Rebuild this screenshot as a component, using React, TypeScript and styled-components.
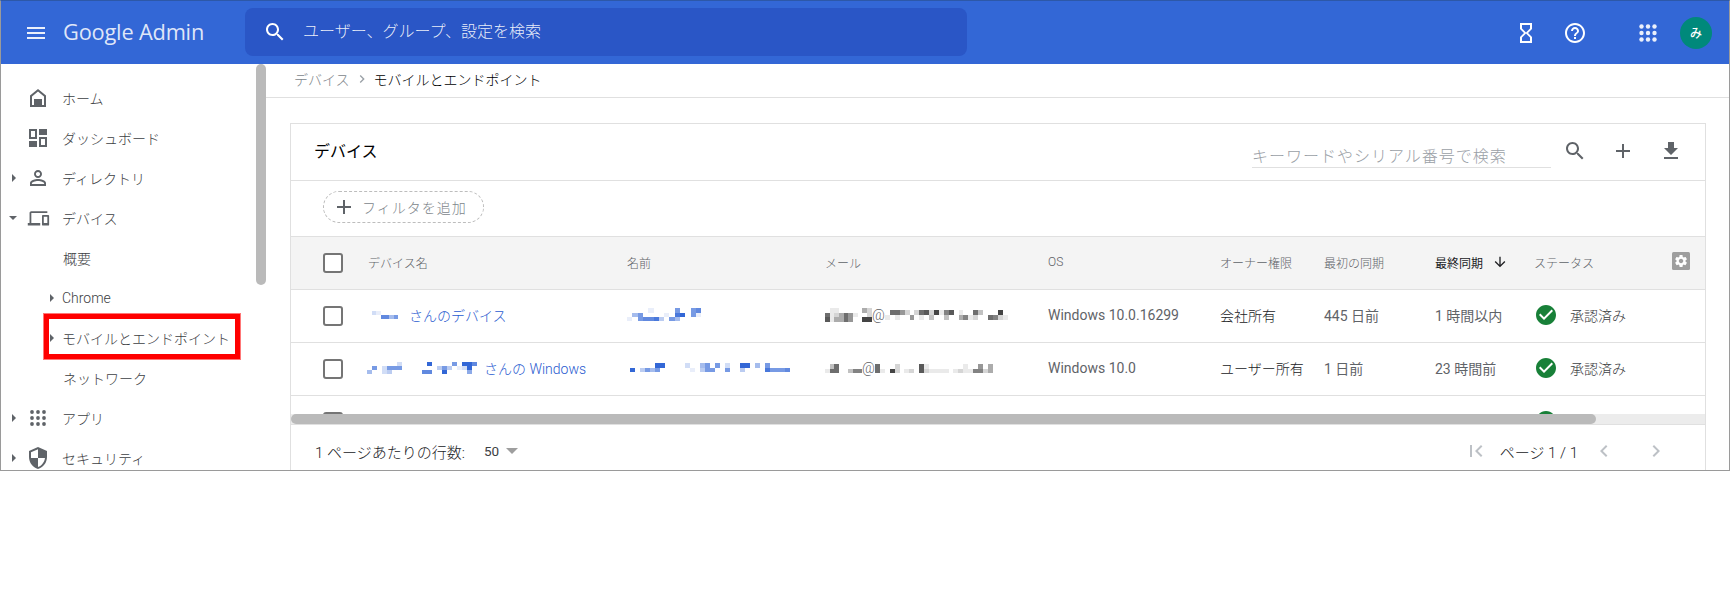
import * as React from 'react';
import styled, { createGlobalStyle } from 'styled-components';

const GlobalStyle = createGlobalStyle`
    html, body {
        margin: 0;
        padding: 0;
        background: #fff;
    }
    body {
        font-family: Roboto, "Noto Sans CJK JP", sans-serif;
        font-size: 14px;
        color: #3c4043;
    }
`;

const COLUMNS = '45px 259px 198px 223px 172px 104px 111px 99px 1fr';

const Frame = styled.div`
    box-sizing: border-box;
    width: 1730px;
    height: 471px;
    border: 1px solid #9a9a9a;
    border-top-color: #2d58a8;
    overflow: hidden;
    display: flex;
    flex-direction: column;
`;

const TopBar = styled.header`
    flex: 0 0 63px;
    display: flex;
    align-items: center;
    background: #3367d6;
    color: #fff;
`;

const MenuButton = styled.div`
    width: 18px;
    margin: 0 18px 0 26px;
    display: flex;
    flex-direction: column;
    gap: 3px;
    span {
        display: block;
        height: 2px;
        background: #fff;
        opacity: .9;
    }
`;

const Logo = styled.div`
    width: 182px;
    margin-bottom: 2px;
    font-family: "Open Sans", sans-serif;
    font-size: 21.8px;
    letter-spacing: -.2px;
    color: rgba(255, 255, 255, .85);
`;

const SearchBox = styled.div`
    width: 722px;
    height: 48px;
    margin-top: -1px;
    box-sizing: border-box;
    padding-left: 18px;
    display: flex;
    align-items: center;
    gap: 16px;
    background: #2a56c6;
    border-radius: 8px;
    font-size: 16px;
    font-weight: 300;
    color: rgba(255, 255, 255, .9);
`;

const SearchText = styled.span`
    margin-top: -5px;
`;

const BarIcons = styled.div`
    margin-left: auto;
    display: flex;
    align-items: center;
    padding-right: 17px;
`;

const BarIcon = styled.svg<{ $gap: number }>`
    display: block;
    width: 24px;
    height: 24px;
    margin-right: ${p => p.$gap}px;
    fill: #fff;
`;

const Avatar = styled.div`
    width: 32px;
    height: 32px;
    border-radius: 50%;
    background: #00897b;
    color: #fff;
    font-size: 12px;
    font-weight: 500;
    display: flex;
    align-items: center;
    justify-content: center;
`;

const Body = styled.div`
    flex: 1;
    display: flex;
    min-height: 0;
`;

const SideBar = styled.nav`
    flex: 0 0 265px;
    display: flex;
`;

const NavList = styled.div`
    flex: 1;
    padding-top: 14px;
`;

const NavRow = styled.div<{ $sub?: boolean }>`
    position: relative;
    height: 40px;
    display: flex;
    align-items: center;
    padding-left: ${p => (p.$sub ? 47 : 9)}px;
    color: #3c4043;
    font-size: 14px;
`;

const CaretSlot = styled.div<{ $sub?: boolean }>`
    flex: 0 0 ${p => (p.$sub ? 14 : 17)}px;
    display: flex;
`;

const Caret = styled.span<{ $open?: boolean }>`
    display: block;
    width: 0;
    height: 0;
    margin-left: ${p => (p.$open ? -1 : 2)}px;
    ${p =>
        p.$open
            ? 'border-left: 4px solid transparent; border-right: 4px solid transparent; border-top: 4px solid #5f6368;'
            : 'border-top: 4px solid transparent; border-bottom: 4px solid transparent; border-left: 4px solid #5f6368;'}
`;

const NavIcon = styled.svg`
    flex: 0 0 24px;
    width: 24px;
    height: 24px;
    margin: 0 12px 0 -1px;
    fill: #5f6368;
`;

const NavLabel = styled.span<{ $plain?: boolean }>`
    margin-left: ${p => (p.$plain ? 53 : 0)}px;
    font-weight: 300;
`;

const Annotation = styled.div`
    position: absolute;
    left: 43px;
    top: -4px;
    width: 186px;
    height: 35px;
    border: 5px solid #f00;
    outline: 1px solid #ff7777;
    pointer-events: none;
`;

const SideRail = styled.div`
    flex: 0 0 10px;
`;

const SideThumb = styled.div`
    height: 221px;
    background: #bababa;
    border-radius: 5px;
`;

const Main = styled.main`
    flex: 1;
    min-width: 0;
    display: flex;
    flex-direction: column;
`;

const Crumbs = styled.div`
    flex: 0 0 34px;
    box-sizing: border-box;
    display: flex;
    align-items: center;
    padding: 0 0 3px 28px;
    border-bottom: 1px solid #e0e0e0;
    font-weight: 300;
`;

const CrumbParent = styled.span`
    color: #80868b;
`;

const CrumbArrow = styled.svg`
    width: 16px;
    height: 16px;
    margin: 0 4px;
    fill: #9aa0a6;
`;

const CrumbCurrent = styled.span`
    color: #000;
`;

const Card = styled.section`
    margin: 25px 23px 0 24px;
    border: 1px solid #e0e0e0;
    height: 360px;
    flex-shrink: 0;
`;

const CardTitleRow = styled.div`
    box-sizing: border-box;
    height: 57px;
    display: flex;
    align-items: center;
    padding: 0 22px 2px 23px;
    border-bottom: 1px solid #e0e0e0;
`;

const CardTitle = styled.h2`
    margin: -2px 0 0;
    font-size: 16px;
    font-weight: 400;
    color: #000;
`;

const KeywordField = styled.div`
    margin-left: auto;
    width: 299px;
    box-sizing: border-box;
    height: 26px;
    margin-top: 8px;
    padding-top: 4px;
    border-bottom: 1px solid #e0e0e0;
    color: #9aa0a6;
    font-size: 16px;
    font-weight: 300;
    letter-spacing: 1px;
    line-height: 22px;
`;

const ToolIcon = styled.svg<{ $gap: number }>`
    width: 24px;
    height: 24px;
    margin-left: ${p => p.$gap}px;
    fill: #5f6368;
`;

const FilterRow = styled.div`
    box-sizing: border-box;
    height: 56px;
    display: flex;
    align-items: center;
    padding: 0 0 3px 32px;
    border-bottom: 1px solid #e0e0e0;
`;

const FilterPill = styled.div`
    box-sizing: border-box;
    width: 161px;
    height: 32px;
    display: flex;
    align-items: center;
    padding-left: 8px;
    gap: 6px;
    border: 1px dashed #bdbdbd;
    border-radius: 16px;
    color: #80868b;
    font-size: 14px;
    font-weight: 300;
    letter-spacing: 1px;
    svg {
        width: 24px;
        height: 24px;
        fill: #5f6368;
    }
`;

const TableScroll = styled.div`
    height: 177px;
    overflow: hidden;
`;

const HeadRow = styled.div`
    box-sizing: border-box;
    height: 53px;
    display: grid;
    grid-template-columns: ${COLUMNS};
    align-items: center;
    padding-left: 32px;
    background: #f4f4f4;
    border-bottom: 1px solid #e0e0e0;
`;

const HeadCell = styled.div<{ $sorted?: boolean }>`
    display: flex;
    align-items: center;
    padding-bottom: 2px;
    font-size: 12px;
    font-weight: ${p => (p.$sorted ? 400 : 300)};
    color: ${p => (p.$sorted ? '#202124' : '#5f6368')};
`;

const SortArrow = styled.svg`
    width: 16px;
    height: 16px;
    margin-left: 9px;
    fill: #202124;
`;

const GearBox = styled.svg`
    width: 18px;
    height: 18px;
    display: block;
    margin: -2px 15px 0 auto;
`;

const DataRow = styled.div`
    box-sizing: border-box;
    height: 53px;
    display: grid;
    grid-template-columns: ${COLUMNS};
    align-items: center;
    padding-left: 32px;
    border-bottom: 1px solid #e0e0e0;
`;

const Check = styled.div`
    box-sizing: border-box;
    width: 20px;
    height: 20px;
    border: 2px solid #757575;
    border-radius: 3px;
    background: #fff;
`;

const Cell = styled.div<{ $dark?: boolean }>`
    display: flex;
    align-items: center;
    padding-bottom: 2px;
    white-space: nowrap;
    font-size: 14px;
    font-weight: ${p => (p.$dark ? 300 : 400)};
    color: ${p => (p.$dark ? '#202124' : '#5f6368')};
`;

const DeviceLink = styled.span`
    color: #2a5bd0;
    font-weight: 300;
`;

const At = styled.span`
    font-size: 14px;
    font-weight: 300;
    color: #5f6368;
`;

const StatusCell = styled.div`
    display: flex;
    align-items: center;
    gap: 14px;
    padding-left: 2px;
    font-size: 14px;
    font-weight: 300;
    color: #3c4043;
`;

const StatusText = styled.span`
    margin-top: -3px;
`;

const StatusIcon = styled.svg`
    width: 24px;
    height: 24px;
    margin: -2px -2px 0 -2px;
    fill: #188038;
`;

const MosaicSvg = styled.svg<{ $lead: number; $trail: number; $lift: number }>`
    display: block;
    flex-shrink: 0;
    margin-left: ${p => p.$lead}px;
    margin-right: ${p => p.$trail}px;
    margin-bottom: ${p => p.$lift}px;
`;

const ScrollTrack = styled.div`
    height: 10px;
    background: #ececec;
    border-bottom: 1px solid #e0e0e0;
`;

const ScrollThumb = styled.div`
    height: 10px;
    background: #bababa;
    border-radius: 5px;
`;

const Footer = styled.div`
    height: 52px;
    display: flex;
    align-items: center;
    padding: 0 0 0 24px;
    font-size: 15px;
    font-weight: 300;
    color: #202124;
`;

const RowsLabel = styled.span`
    width: 169px;
`;

const RowsValue = styled.span`
    font-weight: 400;
    font-size: 13.5px;
    color: #3c4043;
`;

const RowsCaret = styled.span`
    margin-left: 7px;
    width: 0;
    height: 0;
    border-left: 6px solid transparent;
    border-right: 6px solid transparent;
    border-top: 6px solid #9e9e9e;
`;

const Pager = styled.div`
    margin-left: auto;
    display: flex;
    align-items: center;
    padding-right: 37px;
`;

const PagerIcon = styled.svg<{ $gap: number }>`
    width: 24px;
    height: 24px;
    margin-left: ${p => p.$gap}px;
    fill: #bdc1c6;
`;

const PagerLabel = styled.span`
    margin: 0 14px 0 12px;
`;

const Dots = styled.svg`
    width: 24px;
    height: 24px;
    margin-right: 20px;
    fill: #fff;
    opacity: .9;
`;

const ICONS = {
    search: 'M15.5 14h-.79l-.28-.27C15.41 12.59 16 11.11 16 9.5 16 5.91 13.09 3 9.5 3S3 5.91 3 9.5 5.91 16 9.5 16c1.61 0 3.09-.59 4.23-1.57l.27.28v.79l5 4.99L20.49 19l-4.99-5zm-6 0C7.01 14 5 11.99 5 9.5S7.01 5 9.5 5 14 7.01 14 9.5 11.99 14 9.5 14z',
    hourglass: 'M6 2v6h.01L6 8.01 10 12l-4 4 .01.01H6V22h12v-5.99h-.01L18 16l-4-4 4-3.99-.01-.01H18V2H6zm10 14.5V20H8v-3.5l4-4 4 4zm-4-5l-4-4V4h8v3.5l-4 4z',
    help: 'M11 18h2v-2h-2v2zm1-16C6.48 2 2 6.48 2 12s4.48 10 10 10 10-4.48 10-10S17.52 2 12 2zm0 18c-4.41 0-8-3.59-8-8s3.59-8 8-8 8 3.59 8 8-3.59 8-8 8zm0-14c-2.21 0-4 1.79-4 4h2c0-1.1.9-2 2-2s2 .9 2 2c0 2-3 1.75-3 5h2c0-2.25 3-2.5 3-5 0-2.21-1.79-4-4-4z',
    home: 'M12 3L4 9.5V21h16V9.5L12 3zm6 16h-2v-6H8v6H6v-8.55l6-4.9 6 4.9V19z',
    person: 'M12 5.9c1.16 0 2.1.94 2.1 2.1s-.94 2.1-2.1 2.1S9.9 9.16 9.9 8s.94-2.1 2.1-2.1m0 9c2.97 0 6.1 1.46 6.1 2.1v1.1H5.9V17c0-.64 3.13-2.1 6.1-2.1M12 4C9.79 4 8 5.79 8 8s1.79 4 4 4 4-1.79 4-4-1.79-4-4-4zm0 9c-2.67 0-8 1.34-8 4v3h16v-3c0-2.66-5.33-4-8-4z',
    devices: 'M4 6h18V4H4c-1.1 0-2 .9-2 2v11H0v3h14v-3H4V6zm19 2h-6c-.55 0-1 .45-1 1v10c0 .55.45 1 1 1h6c.55 0 1-.45 1-1V9c0-.55-.45-1-1-1zm-1 9h-4v-7h4v7z',
    shield: 'M12 1L3 5v6c0 5.55 3.84 10.74 9 12 5.16-1.26 9-6.45 9-12V5l-9-4zm0 10.99h7c-.53 4.12-3.28 7.79-7 8.94V12H5V6.3l7-3.11v8.8z',
    plus: 'M19 13h-6v6h-2v-6H5v-2h6V5h2v6h6v2z',
    download: 'M19 9h-4V3H9v6H5l7 7 7-7zM5 18v2h14v-2H5z',
    down: 'M20 12l-1.41-1.41L13 16.17V4h-2v12.17l-5.58-5.59L4 12l8 8 8-8z',
    check: 'M12 2C6.48 2 2 6.48 2 12s4.48 10 10 10 10-4.48 10-10S17.52 2 12 2zm-2 15l-5-5 1.41-1.41L10 14.17l7.59-7.59L19 8l-9 9z',
    first: 'M18.41 16.59L13.82 12l4.59-4.59L17 6l-6 6 6 6zM6 6h2v12H6z',
    prev: 'M15.41 7.41L14 6l-6 6 6 6 1.41-1.41L10.83 12z',
    next: 'M8.59 16.59L13.17 12 8.59 7.41 10 6l6 6-6 6z',
    chevron: 'M10 6L8.59 7.41 13.17 12l-4.58 4.59L10 18l6-6z',
    gear: 'M19.14 12.94c.04-.3.06-.61.06-.94 0-.32-.02-.64-.07-.94l2.03-1.58c.18-.14.23-.41.12-.61l-1.92-3.32c-.12-.22-.37-.29-.59-.22l-2.39.96c-.5-.38-1.03-.7-1.62-.94l-.36-2.54c-.04-.24-.24-.41-.48-.41h-3.84c-.24 0-.43.17-.47.41l-.36 2.54c-.59.24-1.13.57-1.62.94l-2.39-.96c-.22-.08-.47 0-.59.22L2.74 8.87c-.12.21-.08.47.12.61l2.03 1.58c-.05.3-.09.63-.09.94s.02.64.07.94l-2.03 1.58c-.18.14-.23.41-.12.61l1.92 3.32c.12.22.37.29.59.22l2.39-.96c.5.38 1.03.7 1.62.94l.36 2.54c.05.24.24.41.48.41h3.84c.24 0 .44-.17.47-.41l.36-2.54c.59-.24 1.13-.56 1.62-.94l2.39.96c.22.08.47 0 .59-.22l1.92-3.32c.12-.22.07-.47-.12-.61l-2.01-1.58zM12 15.6c-1.98 0-3.6-1.62-3.6-3.6s1.62-3.6 3.6-3.6 3.6 1.62 3.6 3.6-1.62 3.6-3.6 3.6z'
};

// redacted text in the reference: one string per row, a digit per block
const Mosaic = ({ rows, cell, height = 5, color, lead = 0, trail = 0, lift = 0 }: {
    rows: string[];
    cell: number;
    height?: number;
    color: string;
    lead?: number;
    trail?: number;
    lift?: number;
}) => {
    const width = Math.round(rows[0].length * cell);
    return (
        <MosaicSvg $lead={lead} $trail={trail} $lift={lift} width={width} height={rows.length * height} shapeRendering="crispEdges">
            {rows.map((row, y) =>
                row.split('').map((digit, x) =>
                    digit === '0' ? null : (
                        <rect key={x + '-' + y} x={x * cell} y={y * height} width={cell} height={height} fill={color} fillOpacity={Number(digit) / 9} />
                    )
                )
            )}
        </MosaicSvg>
    );
};

const DashIcon = () => (
    <NavIcon viewBox="0 0 24 24">
        <path fillRule="evenodd" d="M3 3h8v10H3V3zm2 2v6h4V5H5zM13 11h8v10h-8V11zm2 2v6h4v-6h-4zM13 3h8v6h-8zM3 15h8v6H3z" />
    </NavIcon>
);

const DotsIcon = () => (
    <NavIcon viewBox="0 0 24 24">
        {[6, 12, 18].map(y => [6, 12, 18].map(x => <circle key={x + '-' + y} cx={x} cy={y} r="1.9" />))}
    </NavIcon>
);

const ApprovedIcon = () => (
    <StatusIcon viewBox="0 0 24 24"><path d={ICONS.check} /></StatusIcon>
);

export default function App() {
    return (
        <>
            <GlobalStyle />
            <Frame>
                <TopBar>
                    <MenuButton><span /><span /><span /></MenuButton>
                    <Logo>Google Admin</Logo>
                    <SearchBox>
                        <svg width="24" height="24" viewBox="0 0 24 24" fill="#fff"><path d={ICONS.search} /></svg>
                        <SearchText>ユーザー、グループ、設定を検索</SearchText>
                    </SearchBox>
                    <BarIcons>
                        <BarIcon $gap={25} viewBox="0 0 24 24"><path d={ICONS.hourglass} /></BarIcon>
                        <BarIcon $gap={49} viewBox="0 0 24 24"><path d={ICONS.help} /></BarIcon>
                        <Dots viewBox="0 0 24 24">
                            {[5.5, 12, 18.5].map(y => [5.5, 12, 18.5].map(x => <circle key={x + '-' + y} cx={x} cy={y} r="2.2" />))}
                        </Dots>
                        <Avatar>み</Avatar>
                    </BarIcons>
                </TopBar>
                <Body>
                    <SideBar>
                        <NavList>
                            <NavRow><CaretSlot /><NavIcon viewBox="0 0 24 24"><path fillRule="evenodd" d={ICONS.home} /></NavIcon><NavLabel>ホーム</NavLabel></NavRow>
                            <NavRow><CaretSlot /><DashIcon /><NavLabel>ダッシュボード</NavLabel></NavRow>
                            <NavRow><CaretSlot><Caret /></CaretSlot><NavIcon viewBox="0 0 24 24"><path d={ICONS.person} /></NavIcon><NavLabel>ディレクトリ</NavLabel></NavRow>
                            <NavRow><CaretSlot><Caret $open /></CaretSlot><NavIcon viewBox="-2 -2 27 27"><path d={ICONS.devices} /></NavIcon><NavLabel>デバイス</NavLabel></NavRow>
                            <NavRow><NavLabel $plain>概要</NavLabel></NavRow>
                            <NavRow $sub><CaretSlot $sub><Caret /></CaretSlot><NavLabel>Chrome</NavLabel></NavRow>
                            <NavRow $sub>
                                <CaretSlot $sub><Caret /></CaretSlot><NavLabel>モバイルとエンドポイント</NavLabel>
                                <Annotation />
                            </NavRow>
                            <NavRow><NavLabel $plain>ネットワーク</NavLabel></NavRow>
                            <NavRow><CaretSlot><Caret /></CaretSlot><DotsIcon /><NavLabel>アプリ</NavLabel></NavRow>
                            <NavRow><CaretSlot><Caret /></CaretSlot><NavIcon viewBox="0 0 24 24"><path d={ICONS.shield} /></NavIcon><NavLabel>セキュリティ</NavLabel></NavRow>
                        </NavList>
                        <SideRail><SideThumb /></SideRail>
                    </SideBar>
                    <Main>
                        <Crumbs>
                            <CrumbParent>デバイス</CrumbParent>
                            <CrumbArrow viewBox="0 0 24 24"><path d={ICONS.chevron} /></CrumbArrow>
                            <CrumbCurrent>モバイルとエンドポイント</CrumbCurrent>
                        </Crumbs>
                        <Card>
                            <CardTitleRow>
                                <CardTitle>デバイス</CardTitle>
                                <KeywordField>キーワードやシリアル番号で検索</KeywordField>
                                <ToolIcon $gap={12} viewBox="0 0 24 24"><path d={ICONS.search} /></ToolIcon>
                                <ToolIcon $gap={24} viewBox="0 0 24 24"><path d={ICONS.plus} /></ToolIcon>
                                <ToolIcon $gap={24} viewBox="0 0 24 24"><path d={ICONS.download} /></ToolIcon>
                            </CardTitleRow>
                            <FilterRow>
                                <FilterPill>
                                    <svg viewBox="0 0 24 24"><path d={ICONS.plus} /></svg>
                                    フィルタを追加
                                </FilterPill>
                            </FilterRow>
                            <TableScroll>
                                <HeadRow>
                                    <Check />
                                    <HeadCell>デバイス名</HeadCell>
                                    <HeadCell>名前</HeadCell>
                                    <HeadCell>メール</HeadCell>
                                    <HeadCell>OS</HeadCell>
                                    <HeadCell>オーナー権限</HeadCell>
                                    <HeadCell>最初の同期</HeadCell>
                                    <HeadCell $sorted>最終同期<SortArrow viewBox="0 0 24 24"><path d={ICONS.down} /></SortArrow></HeadCell>
                                    <HeadCell>
                                        ステータス
                                        <GearBox viewBox="0 0 18 18">
                                            <rect width="18" height="18" rx="1.5" fill="#9e9e9e" />
                                            <g transform="translate(1.6 1.6) scale(.62)"><path d={ICONS.gear} fill="#fff" /></g>
                                        </GearBox>
                                    </HeadCell>
                                </HeadRow>
                                <DataRow>
                                    <Check />
                                    <Cell>
                                        <Mosaic rows={['210000', '007746']} cell={4.33} height={4} color="#3367d6" lead={4} trail={11} />
                                        <DeviceLink>さんのデバイス</DeviceLink>
                                    </Cell>
                                    <Cell>
                                        <Mosaic rows={['00001000060067', '04600001089061', '10677830640000']} cell={5.3} height={4.5} color="#3367d6" lift={1} />
                                    </Cell>
                                    <Cell>
                                        <Mosaic rows={['0110000042', '7124751002', '8144750099']} cell={4.67} height={4.5} color="#444" />
                                        <At>@</At>
                                        <Mosaic rows={['0775202782916801007300090', '1010050103003004612007621']} cell={4.9} height={5} color="#444" />
                                    </Cell>
                                    <Cell>Windows 10.0.16299</Cell>
                                    <Cell $dark>会社所有</Cell>
                                    <Cell>445 日前</Cell>
                                    <Cell>1 時間以内</Cell>
                                    <StatusCell><ApprovedIcon /><StatusText>承認済み</StatusText></StatusCell>
                                </DataRow>
                                <DataRow>
                                    <Check />
                                    <Cell>
                                        <Mosaic rows={['0000002000009000060997', '0602666000000036301290', '4002300000077009000050']} cell={5} height={4} color="#3367d6" lead={-1} trail={7} lift={1} />
                                        <DeviceLink>さんの Windows</DeviceLink>
                                    </Cell>
                                    <Cell>
                                        <Mosaic rows={['00000990000200460602009904060000', '90364600000010366006003000086667']} cell={5} height={4.5} color="#3367d6" lead={3} lift={1} />
                                    </Cell>
                                    <Cell>
                                        <Mosaic rows={['03700000', '17700366']} cell={4.67} height={4.5} color="#444" />
                                        <At>@</At>
                                        <Mosaic rows={['700020000810000000100504', '710920120821111012116624']} cell={4.9} height={4.5} color="#444" />
                                    </Cell>
                                    <Cell>Windows 10.0</Cell>
                                    <Cell $dark>ユーザー所有</Cell>
                                    <Cell>1 日前</Cell>
                                    <Cell>23 時間前</Cell>
                                    <StatusCell><ApprovedIcon /><StatusText>承認済み</StatusText></StatusCell>
                                </DataRow>
                                <DataRow>
                                    <Check />
                                    <Cell /><Cell /><Cell /><Cell /><Cell /><Cell /><Cell />
                                    <StatusCell><ApprovedIcon /></StatusCell>
                                </DataRow>
                            </TableScroll>
                            <ScrollTrack><ScrollThumb style={{ width: `${(1305 / 1414) * 100}%` }} /></ScrollTrack>
                            <Footer>
                                <RowsLabel>1 ページあたりの行数:</RowsLabel>
                                <RowsValue>50</RowsValue>
                                <RowsCaret />
                                <Pager>
                                    <PagerIcon $gap={0} viewBox="0 0 24 24"><path d={ICONS.first} /></PagerIcon>
                                    <PagerLabel>ページ 1 / 1</PagerLabel>
                                    <PagerIcon $gap={0} viewBox="0 0 24 24"><path d={ICONS.prev} /></PagerIcon>
                                    <PagerIcon $gap={28} viewBox="0 0 24 24"><path d={ICONS.next} /></PagerIcon>
                                </Pager>
                            </Footer>
                        </Card>
                    </Main>
                </Body>
            </Frame>
        </>
    );
}
